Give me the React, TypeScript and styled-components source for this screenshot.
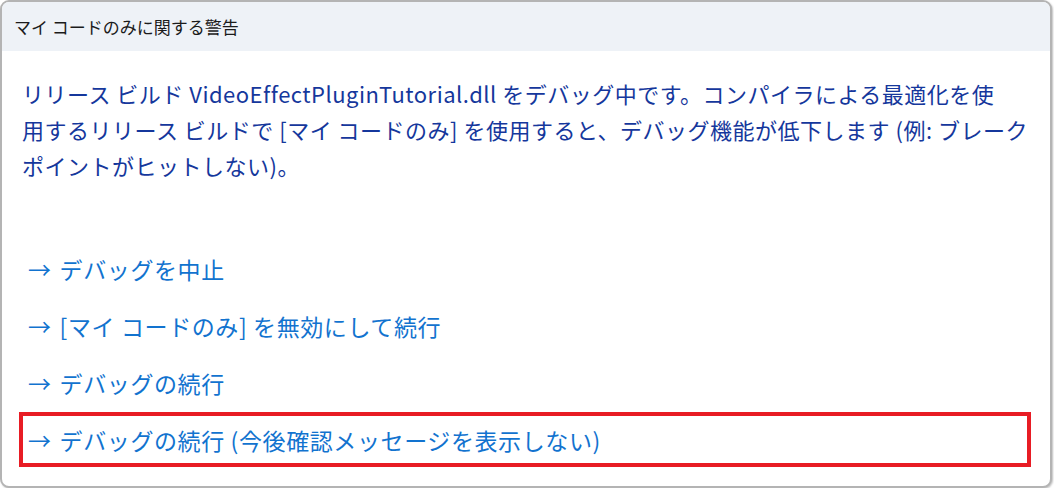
import styled, { createGlobalStyle } from 'styled-components';

const GlobalStyle = createGlobalStyle`
  html, body {
    margin: 0;
    padding: 0;
    background: #ffffff;
  }
  body {
    font-family: "Noto Sans CJK JP", "Noto Sans", sans-serif;
  }
`;

const actions = [
  { text: 'デバッグを中止', id: 1 },
  { text: '[マイ コードのみ] を無効にして続行', id: 2 },
  { text: 'デバッグの続行', id: 3 },
  { text: 'デバッグの続行 (今後確認メッセージを表示しない)', id: 4, selected: true },
];

function App() {
  return (
    <>
      <GlobalStyle />
      <Dialog>
        <TitleBar>マイ コードのみに関する警告</TitleBar>
        <Body>
          <Message>
            リリース ビルド VideoEffectPluginTutorial.dll をデバッグ中です。コンパイラによる最適化を使
            <br />
            用するリリース ビルドで [マイ コードのみ] を使用すると、デバッグ機能が低下します (例: ブレーク
            <br />
            ポイントがヒットしない)。
          </Message>
          <ActionList>
            {actions.map((a) => (
              <Action key={a.id} $selected={!!a.selected}>
                <Arrow>→</Arrow>
                {a.text}
              </Action>
            ))}
          </ActionList>
        </Body>
      </Dialog>
    </>
  );
}

const Dialog = styled.div`
  box-sizing: border-box;
  width: 1052px;
  height: 488px;
  border: 2px solid #b4b4b4;
  border-radius: 9px;
  background: #ffffff;
  overflow: hidden;
  box-shadow: 1px 1px 2px rgba(0, 0, 0, 0.25);
  display: flex;
  flex-direction: column;
`;

const TitleBar = styled.div`
  height: 49px;
  background: #eef2f7;
  display: flex;
  align-items: center;
  padding-left: 12px;
  font-size: 17px;
  color: #1b1b1b;
`;

const Body = styled.div`
  padding: 24px 19px 0 17px;
`;

const Message = styled.p`
  margin: 0 0 0 3px;
  font-size: 22px;
  line-height: 36px;
  color: #15379c;
  white-space: nowrap;
  letter-spacing: 0.5px;
`;

const ActionList = styled.div`
  margin-top: 58px;
  display: flex;
  flex-direction: column;
  gap: 2px;
`;

const Action = styled.div<{ $selected: boolean }>`
  box-sizing: border-box;
  height: 55px;
  display: flex;
  align-items: center;
  padding-left: 5px;
  border: 4px solid ${(p) => (p.$selected ? '#e81c24' : 'transparent')};
  font-size: 23px;
  color: #1273cf;
  white-space: nowrap;
  letter-spacing: 0.6px;
  cursor: pointer;
`;

const Arrow = styled.span`
  margin-right: 8px;
`;

export default App;
